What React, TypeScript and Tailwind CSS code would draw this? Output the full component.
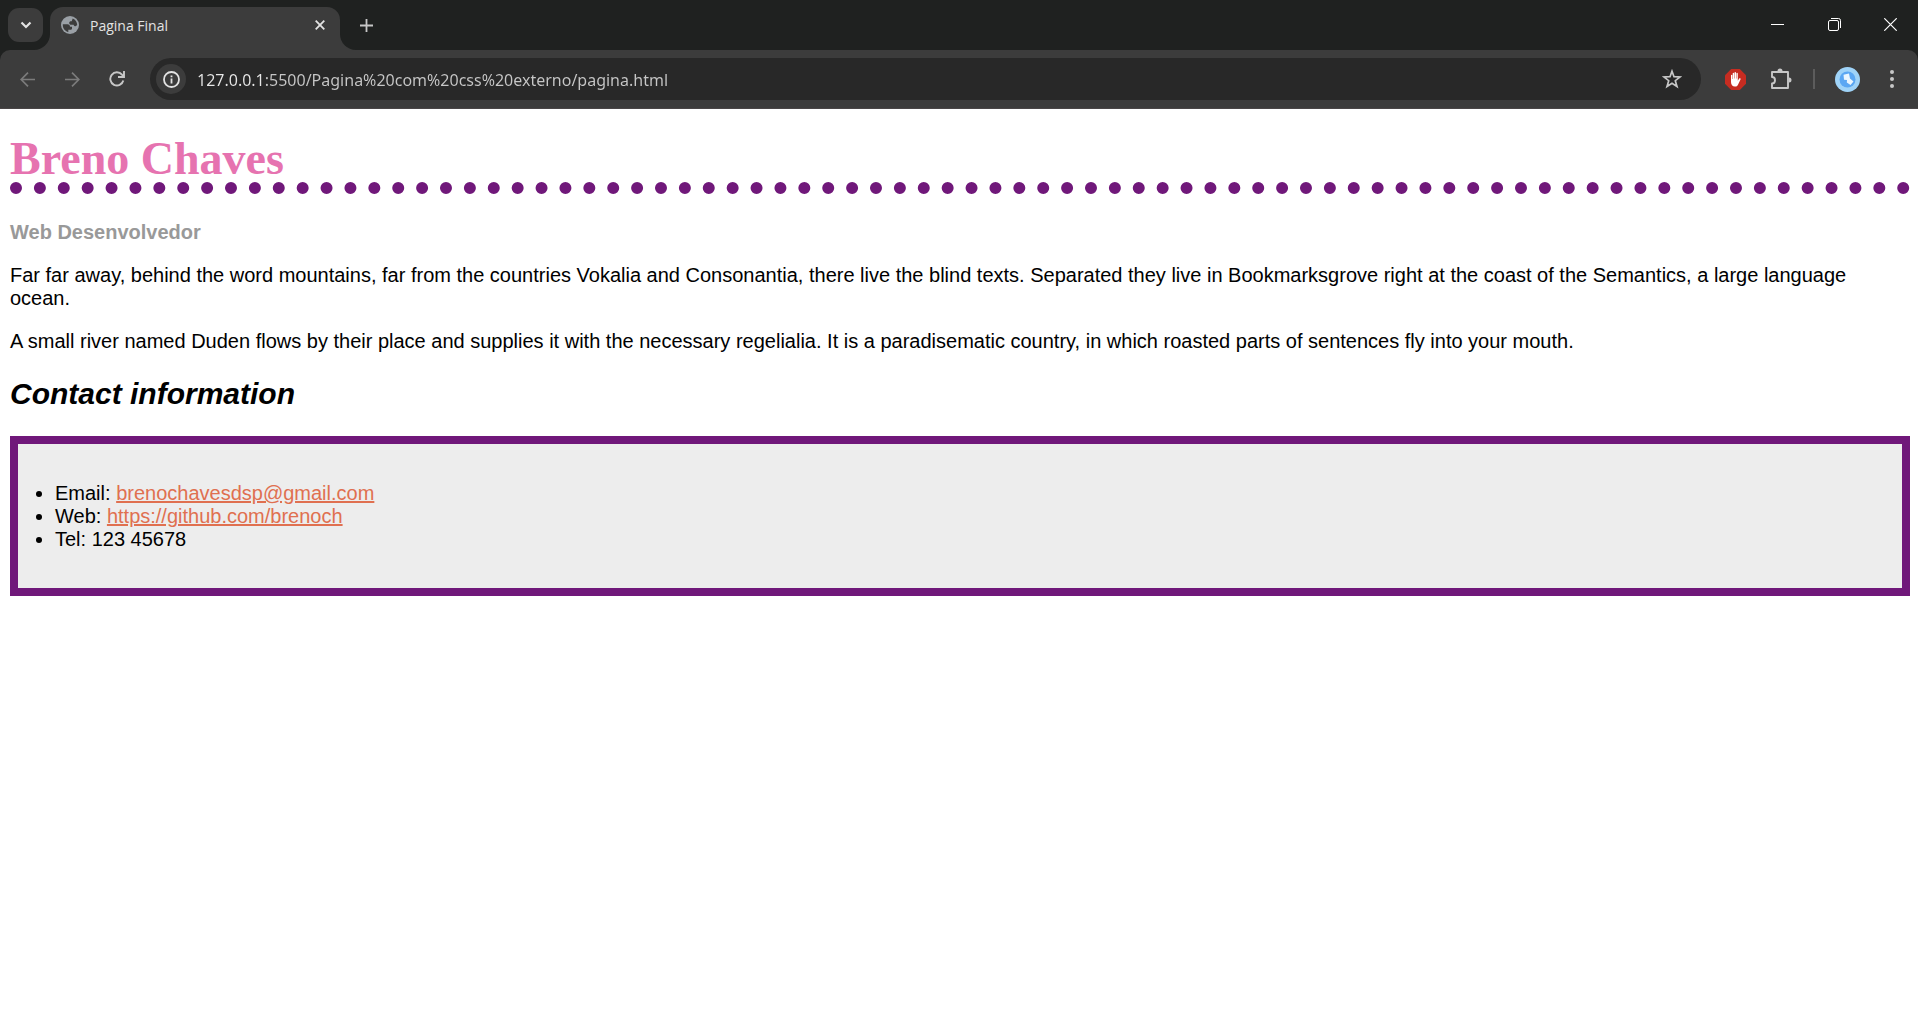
import React from "react";

const iconButton = "flex size-9 shrink-0 items-center justify-center rounded-full";

function TabStrip() {
  return (
    <div className="flex h-[50px] items-start bg-[#1f2120]">
      <div className="h-[50px] w-[50px] shrink-0 bg-[#3c3c3c]">
        <div className="h-full rounded-br-[16px] bg-[#1f2120] pt-2 pl-2">
          <button
            aria-label="Search tabs"
            className="flex h-[34px] w-[35px] items-center justify-center rounded-[11px] bg-[#3c3c3c] text-[#e3e3e3]"
          >
            <svg width="12" height="8" viewBox="0 0 12 8" fill="none" stroke="currentColor" strokeWidth="2.2">
              <path d="M1.5 1.5 6 6l4.500-4.500" />
            </svg>
          </button>
        </div>
      </div>
      <div className="mt-[7px] flex h-[43px] w-[290px] items-center rounded-t-[13px] bg-[#3c3c3c] pr-3 pb-[7px] pl-[11px]">
        <svg width="18" height="18" viewBox="0 0 18 18">
          <circle cx="9" cy="9" r="9" fill="#9aa0a6" />
          <path
            d="M1.800 8.300 6.500 8.300C8.200 8.300 9 9.300 9 10.800L11 10.800 11 12.500C11 13.300 10.300 13.800 9.300 13.800L7.300 13.800 7.300 16C4 15.300 1.800 12.400 1.800 9ZM11.700 2.400C14.400 3.500 16.200 6 16.200 9L14.600 10.300C13.600 10.300 13 9.700 12.600 8.700L10.200 8.700C9 8.700 8.200 7.900 8.200 6.900 8.200 5.800 9 5.200 10 5.200L10.700 5.200Z"
            fill="#3c3c3c"
          />
        </svg>
        <span className="ml-[11px] flex-1 text-[14px] text-[#e3e3e3]">Pagina Final</span>
        <button aria-label="Close tab" className="flex size-4 items-center justify-center text-[#e3e3e3]">
          <svg width="10" height="10" viewBox="0 0 10 10" fill="none" stroke="currentColor" strokeWidth="1.800">
            <path d="m.7.7 8.600 8.600M9.300.7.7 9.300" />
          </svg>
        </button>
      </div>
      <div className="h-[50px] flex-1 bg-[#3c3c3c]">
        <div className="flex h-full items-start justify-between rounded-bl-[16px] bg-[#1f2120]">
          <button aria-label="New tab" className="mt-[7px] ml-2 flex size-9 items-center justify-center text-[#c7c7c7]">
            <svg width="13" height="13" viewBox="0 0 13 13" fill="none" stroke="currentColor" strokeWidth="1.800">
              <path d="M6.500 0v13M0 6.500h13" />
            </svg>
          </button>
          <div className="flex h-[49px] text-white">
            <button aria-label="Minimize" className="flex w-[57px] items-center justify-center">
              <svg width="13" height="13" viewBox="0 0 13 13">
                <path d="M0 6h13v1H0z" fill="currentColor" />
              </svg>
            </button>
            <button aria-label="Restore" className="flex w-[56px] items-center justify-center">
              <svg width="13" height="13" viewBox="0 0 13 13" fill="none" stroke="currentColor">
                <rect x=".5" y="2.500" width="10" height="10" rx="1.500" />
                <path d="M3 .5h7.500a2 2 0 0 1 2 2V10" />
              </svg>
            </button>
            <button aria-label="Close" className="flex w-[56px] items-center justify-center">
              <svg width="13" height="13" viewBox="0 0 13 13" fill="none" stroke="currentColor" strokeWidth="1.200">
                <path d="m.3.3 12.400 12.400M12.700.3.3 12.700" />
              </svg>
            </button>
          </div>
        </div>
      </div>
    </div>
  );
}

function Toolbar() {
  return (
    <div className="bg-[#1f2120]">
      <div className="flex h-[59px] items-center rounded-t-[10px] border-b border-[#4a4647] bg-[#3c3c3c] pl-[9px]">
        <button aria-label="Back" className={iconButton}>
          <svg width="15" height="15" viewBox="0 0 15 15" fill="none" stroke="#7b7b7b" strokeWidth="1.700">
            <path d="M15 7.500H1.300M8 .7 1.200 7.500 8 14.300" />
          </svg>
        </button>
        <button aria-label="Forward" className={iconButton + " ml-[9px]"}>
          <svg width="15" height="15" viewBox="0 0 15 15" fill="none" stroke="#7b7b7b" strokeWidth="1.700">
            <path d="M0 7.500h13.700M7 .7l6.800 6.800L7 14.300" />
          </svg>
        </button>
        <button aria-label="Reload" className={iconButton + " ml-[9px]"}>
          <svg width="16" height="16" viewBox="0 0 16 16" fill="none" stroke="#c7c7c7" strokeWidth="1.900">
            <path d="M14.300 9.500A6.600 6.600 0 1 1 13 3.700L14.600 5.500M15 0v6H9" />
          </svg>
        </button>
        <div className="ml-[15px] flex h-[42px] min-w-0 flex-1 items-center rounded-full bg-[#282828] pr-[11px] pl-[6px]">
          <button
            aria-label="Site information"
            className="flex size-[30px] shrink-0 items-center justify-center rounded-full bg-[#3c3c3c]"
          >
            <svg width="17" height="17" viewBox="0 0 17 17" fill="none" stroke="#e3e3e3" strokeWidth="1.800">
              <circle cx="8.500" cy="8.500" r="7.500" />
              <path d="M8.500 7.500v5M8.500 4.500v1.800" />
            </svg>
          </button>
          <input
            aria-label="Address"
            type="text"
            defaultValue="127.0.0.1:5500/Pagina%20com%20css%20externo/pagina.html"
            className="ml-[11px] min-w-0 flex-1 bg-linear-to-r from-[#e8e8e8] from-[68px] to-[#c7c7c7] to-[68px] bg-clip-text pt-[2px] font-['Noto_Sans','Open_Sans',sans-serif] text-[16px] text-transparent caret-white outline-none"
          />
          <button aria-label="Bookmark this tab" className={iconButton}>
            <svg width="20" height="20" viewBox="0 0 20 20" fill="none" stroke="#c7c7c7" strokeWidth="1.700">
              <path d="m10 2.200 2 5.500 6 .3-4.700 3.700 1.700 5.800L10 14.200l-5 3.300 1.700-5.800L2 8l6-.3z" />
            </svg>
          </button>
        </div>
        <button aria-label="Ad blocker" className={iconButton + " ml-4"}>
          <svg width="21" height="21" viewBox="0 0 21 21">
            <path d="M6.200 0h8.600L21 6.200v8.600L14.800 21H6.200L0 14.800V6.200z" fill="#c62c21" />
            <path
              d="M6 11V6.300c0-.9 1.300-.9 1.300 0V10h.4V4.500c0-1 1.400-1 1.400 0V9.500h.4V3.700c0-1 1.500-1 1.500 0v5.800h.4V4.500c0-1 1.400-1 1.400 0v7.300l1.200-2c.6-.9 2-.5 1.500.6l-2.400 5c-.7 1.500-1.700 2.200-3.200 2.200C7.400 17.600 6 15.600 6 13z"
              fill="#fff"
            />
          </svg>
        </button>
        <button aria-label="Extensions" className={iconButton + " ml-[10px]"}>
          <svg width="22" height="22" viewBox="0 0 22 22" fill="none" stroke="#c7c7c7" strokeWidth="1.900">
            <path d="M2 4h16v16H2v-4.500c4 0 4-6.500 0-6.500z" strokeLinejoin="round" />
            <path d="M7.500 3a2.500 2.500 0 0 1 5 0zM19 9.500a2.500 2.500 0 0 1 0 5z" fill="#c7c7c7" stroke="none" />
          </svg>
        </button>
        <div className="ml-[14px] h-5 w-[2px] bg-[#5c5c5c]" />
        <button aria-label="Profile" className={iconButton + " ml-[14px]"}>
          <svg width="25" height="25" viewBox="0 0 25 25">
            <circle cx="12.500" cy="12.500" r="12.500" fill="#9fd3f8" />
            <circle cx="12.500" cy="12.500" r="8" fill="#5ba7f3" />
            <path d="M8.500 7.800 14 6.500 15 11.500 18.500 14.500 15.500 18 11.800 15.500 12 13 9 12.800z" fill="#eaf6ff" />
          </svg>
        </button>
        <button aria-label="Browser menu" className={iconButton + " mr-2 ml-[9px]"}>
          <svg width="4" height="18" viewBox="0 0 4 18" fill="#c7c7c7">
            <circle cx="2" cy="2" r="2" />
            <circle cx="2" cy="9" r="2" />
            <circle cx="2" cy="16" r="2" />
          </svg>
        </button>
      </div>
    </div>
  );
}

export default function App() {
  return (
    <div className="min-h-screen bg-white">
      <header className="font-['Open_Sans','Noto_Sans',sans-serif]">
        <TabStrip />
        <Toolbar />
      </header>
      <main className="pt-[27px] pr-2 pb-5 pl-[10px] font-['Liberation_Sans',Arial,sans-serif] text-[20px] leading-[23px] text-black">
        <h1 className="border-b-[12px] border-dotted border-[#70187a] font-[Georgia,'Liberation_Serif',serif] text-[46px] leading-[46px] font-bold text-[#e673b0]">
          Breno Chaves
        </h1>
        <p className="mt-[27px] font-bold text-[#999999]">Web Desenvolvedor</p>
        <p className="mt-5">
          Far far away, behind the word mountains, far from the countries Vokalia and Consonantia, there live the blind
          texts. Separated they live in Bookmarksgrove right at the coast of the Semantics, a large language ocean.
        </p>
        <p className="mt-5">
          A small river named Duden flows by their place and supplies it with the necessary regelialia. It is a
          paradisematic country, in which roasted parts of sentences fly into your mouth.
        </p>
        <h2 className="mt-6 text-[30px] leading-[33px] font-bold italic">Contact information</h2>
        <ul className="mt-[26px] list-disc border-8 border-[#70187a] bg-[#ededed] px-[37px] pt-[38px] pb-[37px]">
          <li>
            Email:{" "}
            <a href="mailto:brenochavesdsp@gmail.com" className="text-[#e07050] underline">
              brenochavesdsp@gmail.com
            </a>
          </li>
          <li>
            Web:{" "}
            <a href="https://github.com/brenoch" className="text-[#e07050] underline">
              https://github.com/brenoch
            </a>
          </li>
          <li>Tel: 123 45678</li>
        </ul>
      </main>
    </div>
  );
}
